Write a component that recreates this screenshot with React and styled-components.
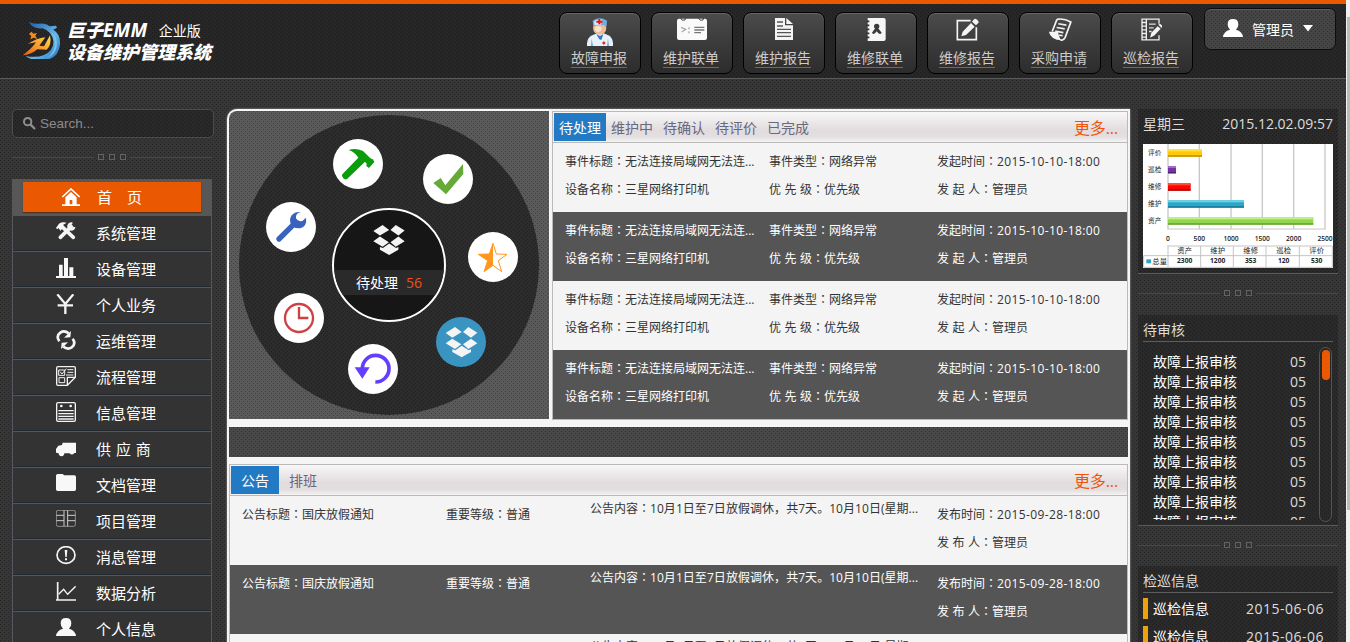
import React from 'react';
import styled, { createGlobalStyle, css } from 'styled-components';

const GlobalStyle = createGlobalStyle`
  * { box-sizing: border-box; }
  html, body { margin: 0; padding: 0; height: 100%; overflow: hidden; }
  body {
    font-family: 'Open Sans', 'Noto Sans CJK SC', sans-serif;
    font-size: 14px;
    color: #fff;
    background: #363636;
  }
  ul { list-style: none; margin: 0; padding: 0; }
  svg { display: block; }
`;

const texture = css`
  background-image:
    conic-gradient(from 0deg at 1px 1px, transparent 270deg, rgba(0, 0, 0, 0.3) 0),
    conic-gradient(from 0deg at 1px 1px, transparent 270deg, rgba(0, 0, 0, 0.3) 0);
  background-size: 4px 4px;
  background-position: 0 0, 2px 2px;
`;

const Window = styled.div`
  display: flex;
  width: 1350px;
  height: 642px;
  overflow: hidden;
`;

const Page = styled.div`
  width: 1346px;
  background-color: #363636;
  ${texture}
`;

const PageScroll = styled.div`
  width: 4px;
  padding: 17px 0 0 1px;
  background: #f0f0f0;
`;

const PageThumb = styled.div`
  height: 493px;
  background: #bcbcbc;
`;

const Header = styled.header`
  display: flex;
  height: 79px;
  border-top: 4px solid #ea5902;
  border-bottom: 1px solid #5a5a5a;
  background-color: #272727;
  ${texture}
`;

const Brand = styled.div`
  display: flex;
  width: 559px;
  padding: 15px 0 0 22px;
`;

const BrandText = styled.div`
  display: flex;
  flex-direction: column;
  margin-left: 7px;
  font-weight: 900;
  font-style: italic;
  font-size: 18px;
  line-height: 22px;
  white-space: nowrap;
`;

const BrandLine = styled.div`
  display: flex;
  align-items: center;
  height: 22px;
`;

const Latin = styled.span`
  font-size: 19px;
  font-weight: 700;
  letter-spacing: 0.3px;
`;

const Edition = styled.span`
  margin: 1px 0 0 11px;
  font-size: 14px;
  font-style: normal;
  font-weight: 400;
`;

const Actions = styled.nav`
  display: flex;
  gap: 10px;
  padding-top: 8px;
`;

const Action = styled.a`
  display: flex;
  flex-direction: column;
  align-items: center;
  width: 82px;
  height: 62px;
  padding: 5px 2px 0 0;
  border: 1px solid #000;
  border-radius: 8px;
  background: linear-gradient(#4b4b4b, #2c2c2c);
  box-shadow: inset 0 1px 0 #666;
  color: #ccc;
`;

const ActionIcon = styled.span`
  display: flex;
  justify-content: center;
  height: 30px;
  margin-right: -1px;
`;

const ActionLabel = styled.span`
  height: 20px;
  border-bottom: 1px solid #6a6a6a;
  line-height: 19px;
`;

const Account = styled.div`
  display: flex;
  align-items: center;
  width: 132px;
  height: 42px;
  margin: 4px 0 0 11px;
  padding: 0 0 2px 18px;
  border: 1px solid #0d0d0d;
  border-radius: 7px;
  background-color: #454545;
  box-shadow: inset 0 1px 0 #5c5c5c;
  ${texture}
`;

const AccountName = styled.span`
  margin: 2px 9px 0 9px;
`;

const Columns = styled.div`
  display: grid;
  grid-template-columns: 202px 903px 200px;
  column-gap: 13px;
  padding: 30px 0 0 12px;
  > :last-child { margin-left: -5px; }
`;

const Column = styled.div`
  width: 200px;
`;

const SearchBox = styled.div`
  display: flex;
  align-items: center;
  width: 202px;
  height: 29px;
  padding-left: 10px;
  border: 1px solid #4c4c4c;
  border-radius: 5px;
  background-color: #292929;
  color: #8c8c8c;
  font: 13.5px 'Liberation Sans', sans-serif;
  ${texture}
  span { margin: -1px 0 0 4px; }
`;

const DividerRow = styled.div`
  display: flex;
  align-items: center;
  gap: 5px;
  height: ${(p) => p.$height}px;
  padding-bottom: ${(p) => p.$height - 38}px;
  &::before, &::after {
    content: '';
    flex: 1;
    height: 1px;
    margin-right: -1px;
    background: #4a4a48;
  }
  &::after { margin: 0 0 0 -1px; }
  i {
    width: 6px;
    height: 6px;
    border: 1px solid #64625e;
  }
`;

const Menu = styled.ul`
  width: 200px;
  border: 1px solid #55585c;
  border-top: 0;
  background: #333;
`;

const HomeItem = styled.li`
  height: 37px;
  margin: 0 -1px;
  padding: 3px 11px 0;
  background: #575757;
`;

const HomeLink = styled.a`
  display: flex;
  align-items: center;
  height: 30px;
  padding: 0 0 2px 39px;
  background: #ea5902;
  box-shadow: 0 1px 1px #54311c;
  font-size: 15px;
  white-space: pre;
  svg { margin: 1px 17px 0 0; }
`;

const MenuItem = styled.li`
  display: flex;
  height: 36px;
  padding: 6px 0 0 43px;
  border-bottom: 1px solid #53565c;
  box-shadow: inset 0 -1px 0 #232933;
  font-size: 15px;
  line-height: 22px;
  span { margin-left: 20px; word-spacing: 1px; }
`;

const Board = styled.main`
  height: 560px;
  padding: 2px;
  border-radius: 10px 0 0 0;
  background: #f5f5f5;
  box-shadow: 0 0 2px #b9b3b3;
`;

const TopRow = styled.div`
  display: flex;
  justify-content: space-between;
  height: 309px;
`;

const Strip = styled.div`
  height: 30px;
  margin: 7px 0;
  background-color: #484848;
  ${texture}
`;

const WheelPane = styled.div`
  width: 320px;
  height: 308px;
  padding: 4px 0 0 10px;
  border-radius: 8px 0 0 0;
  background-color: #5a5a5a;
  ${texture}
`;

const Wheel = styled.div`
  position: relative;
  width: 300px;
  height: 300px;
  border-radius: 50%;
  background-color: #2c2c2c;
  ${texture}
`;

const Node = styled.a`
  position: absolute;
  left: ${(p) => p.$x}px;
  top: ${(p) => p.$y}px;
  width: 50px;
  height: 50px;
  border-radius: 50%;
  background: ${(p) => p.$fill || '#fff'};
`;

const Hub = styled.div`
  position: absolute;
  left: 93px;
  top: 93px;
  display: flex;
  flex-direction: column;
  align-items: center;
  width: 114px;
  height: 114px;
  padding-top: 15px;
  overflow: hidden;
  border: 2px solid #fff;
  border-radius: 50%;
  background-color: #171717;
  ${texture}
`;

const HubLabel = styled.div`
  width: 110px;
  height: 25px;
  margin-top: 15px;
  background: #2a2a2a;
  line-height: 25px;
  text-align: center;
  b { margin-left: 8px; color: #ee4f12; font-weight: 400; }
`;

const Table = styled.section`
  width: ${(p) => p.$width}px;
  border: 1px solid #bababa;
  background: #f4f4f4;
`;

const TabBar = styled.div`
  display: flex;
  height: 31px;
  padding: 1px;
  border-bottom: 1px solid #bababa;
  background: linear-gradient(#f8f7f7, #e2dcde 60%, #e3dedf 82%, #f5f3f3);
`;

const Tab = styled.a`
  height: 28px;
  padding: 0 ${(p) => p.$pad}px;
  background: ${(p) => (p.$active ? '#217ac3' : 'transparent')};
  color: ${(p) => (p.$active ? '#fff' : '#68687e')};
  line-height: 29px;
`;

const More = styled.a`
  margin: 0 8px 0 auto;
  color: #f0540c;
  font-size: 16px;
  letter-spacing: -0.1px;
  line-height: 30px;
`;

const Row = styled.div`
  display: grid;
  grid-template-columns: ${(p) => p.$columns};
  height: 69px;
  padding: 4px 0 0 12px;
  background: ${(p) => (p.$dark ? '#555' : '#f4f4f4')};
  color: ${(p) => (p.$dark ? '#fff' : '#333')};
  font-size: 12px;
  line-height: 28px;
  white-space: nowrap;
  word-spacing: 0.4px;
`;

const Cell = styled.div`
  margin-top: ${(p) => (p.$raised ? '-6px' : 0)};
`;

const FieldLine = styled.div`
  height: 28px;
`;

const Colon = styled.span`
  font-family: 'Noto Sans CJK TC', sans-serif;
`;

const Value = styled.span`
  letter-spacing: ${(p) => p.$track || 0}px;
`;

const Panel = styled.section`
  height: ${(p) => p.$height}px;
  padding: 0 5px;
  border-bottom: 1px solid #5a5a5a;
  background-color: #2a2a2a;
  color: #ddd;
  ${texture}
`;

const Clock = styled.div`
  display: flex;
  justify-content: space-between;
  height: 35px;
  line-height: 30px;
`;

const PanelTitle = styled.h3`
  height: 27px;
  margin: 0;
  border-bottom: 1px solid #5c5c5c;
  font-size: 14px;
  font-weight: 400;
  line-height: 30px;
`;

const ReviewBody = styled.div`
  display: flex;
  justify-content: space-between;
  padding: 5px 0 0 10px;
`;

const ReviewList = styled.ul`
  width: 153px;
  height: 173px;
  padding-top: 5px;
  overflow: hidden;
`;

const ReviewItem = styled.li`
  display: flex;
  justify-content: space-between;
  height: 20px;
  line-height: 20px;
  span:first-child { color: #fff; }
`;

const Track = styled.div`
  width: 13px;
  height: 175px;
  margin-right: 1px;
  padding: 2px 0 0 1.5px;
  border: 1px solid #555;
  border-radius: 7px;
`;

const Thumb = styled.div`
  width: 8px;
  height: 30px;
  border-radius: 4px;
  background: #ea5902;
`;

const PatrolItem = styled.div`
  display: flex;
  justify-content: space-between;
  height: 21px;
  margin: 5px 0 7px;
  padding: 0 9px 0 5px;
  border-left: 5px solid #eda20c;
  line-height: 21px;
  span:first-child { color: #fff; }
`;

const Logo = () => (
  <svg width="38" height="40" viewBox="0 0 114 120">
    <defs>
      <linearGradient id="blue" x1="0" y1="0" x2="1" y2="1">
        <stop offset="0" stopColor="#1755a5" />
        <stop offset="0.6" stopColor="#69b7e8" />
        <stop offset="1" stopColor="#1e6fb9" />
      </linearGradient>
      <linearGradient id="fire" x1="1" y1="0" x2="0" y2="1">
        <stop offset="0" stopColor="#ffe04a" />
        <stop offset="1" stopColor="#ec5a12" />
      </linearGradient>
    </defs>
    <path fill="url(#blue)" d="M20 8Q34 16 50 14Q72 12 82 22L102 20L105 26L94 32Q116 46 114 76Q110 120 64 124Q28 126 10 110Q42 118 66 108Q96 94 94 66Q90 38 62 28Q32 30 20 8Z" />
    <path fill="#77c3ef" d="M84 36Q110 54 104 84Q98 108 74 118Q100 100 98 72Q98 52 84 36Z" />
    <path fill="url(#fire)" d="M2 109Q30 88 42 70L18 74Q44 58 70 55L52 80L66 82L84 49Q90 78 74 92L46 91Q26 108 2 109Z" />
    <path fill="#f58a1c" d="M28 38L35 44L45 42L40 50L46 60L35 56L25 61L28 51L21 45Z" />
  </svg>
);

const actionIcons = {
  doctor: (
    <svg width="26" height="28" viewBox="0 0 78 84">
      <path fill="#e6f1fc" d="M0 84Q-2 60 16 52L30 46H50L64 52Q80 60 78 84Z" />
      <path fill="#6ca8df" d="M14 62L18 84H12ZM63 62L60 84H66Z" />
      <ellipse cx="38" cy="30" rx="20" ry="20" fill="#edbb94" />
      <path fill="#fbe2cc" d="M24 26Q38 20 44 30Q42 44 30 42Q22 38 24 26Z" />
      <path fill="#73aee0" d="M17 8Q38 -6 60 8L59 25Q38 16 19 25Z" />
      <path fill="#d7ebfb" d="M22 9Q34 2 44 4L42 20L22 21Z" />
      <path fill="#e11" d="M34 3h6v5h6v6h-6v5h-6v-5h-6V8h6zM49 70h3v3h3v4h-3v3h-3v-3h-3v-4h3z" />
      <path fill="#2f76c4" d="M28 49L39 54L49 49L43 66L37 64Z" />
    </svg>
  ),
  calendar: (
    <svg width="30" height="22" viewBox="0 0 90 66">
      <rect x="0" y="2" width="90" height="64" rx="6" fill="#fafafa" />
      <path d="M10 0Q14 10 24 6L26 0M64 0Q68 10 78 6L80 0" fill="none" stroke="#444" strokeWidth="3" />
      <path d="M12 28L26 34L14 42M36 28V34M36 40V46" fill="none" stroke="#aaa" strokeWidth="4" />
      <path d="M52 28H82M52 36H82M52 44H72" stroke="#777" strokeWidth="4" />
    </svg>
  ),
  doc: (
    <svg width="18" height="22" viewBox="0 0 54 66">
      <path fill="#f4f4f4" d="M0 0H30V22H54V66H0ZM34 0L54 18H34Z" />
      <path d="M6 12H24M6 24H24M6 34H48M6 44H48M6 55H48" stroke="#555" strokeWidth="4" />
    </svg>
  ),
  contacts: (
    <svg width="20" height="23" viewBox="0 0 58 69">
      <path fill="#f6f6f6" d="M4 0H52Q58 0 58 6V63Q58 69 52 69H4Z" />
      <path d="M0 10H9M0 22H9M0 34H9M0 46H9M0 58H9" stroke="#333" strokeWidth="5" />
      <circle cx="31" cy="25" r="8" fill="#3a3a3a" />
      <path fill="#3a3a3a" d="M27 30H35L46 44Q40 54 31 40Q22 54 17 44Z" />
    </svg>
  ),
  edit: (
    <svg width="23" height="23" viewBox="0 0 69 69">
      <path d="M44 8H4V65H61V28" fill="none" stroke="#f4f4f4" strokeWidth="5" />
      <path fill="#f4f4f4" d="M16 55L20 41L45 15L56 26L30 51ZM48 11L54 4Q58 0 63 5L66 8Q70 12 66 16L60 22Z" />
    </svg>
  ),
  scroll: (
    <svg width="24" height="23" viewBox="0 0 70 68">
      <path d="M26 4Q46 0 67 12L50 58Q46 66 36 66M26 4L12 40" fill="none" stroke="#f4f4f4" strokeWidth="5" />
      <path fill="#f4f4f4" d="M2 41H29Q33 62 40 66Q8 66 2 41Z" />
      <path d="M30 17L54 21M25 28L49 32M21 39L45 43M32 51L43 52" stroke="#eee" strokeWidth="5" />
    </svg>
  ),
  notebook: (
    <svg width="21" height="23" viewBox="0 0 63 68">
      <path d="M54 17V3H3V65H54V51M16 3V65M3 13H16M3 24H16M3 35H16M3 46H16M3 57H16" fill="none" stroke="#eee" strokeWidth="4" />
      <path d="M24 18H44M24 29H38M24 40H32" stroke="#ddd" strokeWidth="4" />
      <path fill="#f4f4f4" d="M27 59L31 44L50 24L59 32L40 52ZM52 20Q57 15 62 21Q66 25 61 29Z" />
    </svg>
  ),
};

const actions = [
  ['doctor', '故障申报'],
  ['calendar', '维护联单'],
  ['doc', '维护报告'],
  ['contacts', '维修联单'],
  ['edit', '维修报告'],
  ['scroll', '采购申请'],
  ['notebook', '巡检报告'],
];

const userShape = (
  <path d="M14 16Q14 0 30 0Q46 0 46 16Q46 27 39 32Q58 37 60 54H0Q2 37 21 32Q14 27 14 16Z" />
);

const MenuIcon = ({ children }) => (
  <svg width="20" height="20" viewBox="0 0 60 60" fill="#f8f8f8">
    {children}
  </svg>
);

const line = { fill: 'none', stroke: '#f4f4f4' };

const menu = [
  ['系统管理', (
    <>
      <path d="M13 46L46 14M18 14L52 46" {...line} strokeWidth="11" strokeLinecap="round" />
      <path d="M0 18L9 5Q19 -2 32 2L21 9L24 15L13 26L8 18L4 22Z" />
      <path d="M49 5A9 9 0 1 0 55 15" {...line} strokeWidth="7" />
    </>
  )],
  ['设备管理', <path d="M0 54H60V60H0ZM9 20H20V56H9ZM24 0H36V56H24ZM40 28H52V56H40Z" />],
  ['个人业务', <path d="M4 1L28 30L52 1M5 34H51M28 30V60" {...line} strokeWidth="7" />],
  ['运维管理', (
    <>
      <path d="M10 34Q-1 18 13 8Q25 0 38 10M50 26Q61 42 47 52Q35 60 22 50" {...line} strokeWidth="8" />
      <path d="M24 23L43 22L45 3ZM36 37L17 38L15 57Z" />
    </>
  )],
  ['流程管理', (
    <>
      <path d="M58 32V6Q58 2 54 2H6Q2 2 2 6V54Q2 58 6 58H34L58 34ZM34 58V34H58" {...line} strokeWidth="4" />
      <path d="M8 12H26V28H8ZM12 17L18 24L31 8M34 11H52M34 19H52M30 27H52M9 35H26V50H9Z" {...line} strokeWidth="3" />
    </>
  )],
  ['信息管理', (
    <>
      <rect x="2" y="2" width="56" height="56" rx="4" {...line} strokeWidth="4" />
      <path d="M7 26H53M7 35H53M7 43H53M7 51H53" {...line} strokeWidth="4" />
      <circle cx="16" cy="12" r="4" /><circle cx="44" cy="12" r="4" />
    </>
  )],
  ['供 应 商', <path d="M20 14H60V45H55A8 8 0 0 1 41 46H25A8 8 0 0 1 8 46L0 44V33L7 23L18 21Z" />],
  ['文档管理', <path d="M0 5Q0 0 5 0H18Q22 0 24 4H55Q60 4 60 9V46Q60 51 55 51H5Q0 51 0 46Z" />],
  ['项目管理', (
    <>
      <rect x="1" y="1" width="57" height="48" rx="5" fill="none" stroke="#bbb" strokeWidth="2" />
      <path d="M24 1V49M35 1V49M1 16H24M1 32H24M35 16H58M35 32H58" fill="none" stroke="#ccc" strokeWidth="3" />
    </>
  )],
  ['消息管理', (
    <>
      <ellipse cx="30" cy="27" rx="27" ry="25" {...line} strokeWidth="5" />
      <path d="M26 12H34L32 33H28ZM27 37H33V43H27Z" />
    </>
  )],
  ['数据分析', (
    <>
      <path d="M5 0V56M0 54H60" {...line} strokeWidth="5" />
      <path d="M8 37L23 22L35 37L59 13" {...line} strokeWidth="4" />
    </>
  )],
  ['个人信息', userShape],
];

const boxPaths = (
  <g fill="#f4f4f4">
    <path d="M0 18L28 0L48 15L20 32ZM52 15L68 0L95 17L76 32ZM0 49L20 35L47 52L28 66ZM52 52L76 35L95 49L68 66ZM48 56L69 70L76 67V75L48 91L20 75V67L29 70Z" />
  </g>
);

const wheelNodes = [
  { x: 94, y: 24, icon: <path fill="#0a9c0a" d="M47 33Q68 25 90 36L109 55L116 60L120 61L124 69L108 87L100 81L101 74L96 68L43 119Q37 124 31 118Q24 112 28 106L76 56Q66 40 47 33Z" /> },
  { x: 184, y: 38.7, icon: <path fill="#65a936" d="M31 87L53 72L67 94L120 30L121 60L69 121Z" /> },
  { x: 229, y: 116.7, icon: (
    <>
      <path fill="#fff" stroke="#ff961f" strokeWidth="3" d="M75 34L85 66L117 67L91 86L101 119L75 100L48 119L59 86L31 67L64 66Z" />
      <path fill="#ff961f" d="M75 34V100L48 120L59 86L31 67L64 66Z" />
    </>
  ) },
  { x: 196.7, y: 202, fill: '#3a94c2', icon: <g transform="translate(29 30)">{boxPaths}</g> },
  { x: 109.2, y: 228.6, icon: (
    <>
      <path fill="none" stroke="#633eff" strokeWidth="11" d="M43 74A40 40 0 1 1 82 114" />
      <path fill="#633eff" d="M20 70H65L43 104Z" />
    </>
  ) },
  { x: 34.6, y: 177.7, icon: (
    <g fill="none" stroke="#cf4145" strokeWidth="7">
      <circle cx="75" cy="75" r="42" /><path d="M75 42V75H103" />
    </g>
  ) },
  { x: 26.6, y: 87, icon: (
    <>
      <path stroke="#3962bd" strokeWidth="16" strokeLinecap="round" d="M39 111L83 67" />
      <path fill="#3962bd" d="M104 30Q88 34 90 49Q97 62 110 56L120 47Q124 72 103 79Q87 80 77 71Q67 55 77 40Q87 28 104 30Z" />
    </>
  ) },
];

const Field = ({ label, track, children }) => (
  <FieldLine>
    {label}
    <Colon>：</Colon>
    <Value $track={track}>{children}</Value>
  </FieldLine>
);

const Divider = ({ height = 41 }) => <DividerRow $height={height}><i /><i /><i /></DividerRow>;

const chartRows = [
  ['评价', 16, 102, '#ffc90a', '#ffe23b', '#b98400'],
  ['巡检', 66, 24, '#7333a4', '#a369cf', '#4d1d77'],
  ['维修', 118, 68, '#fb0505', '#ff4a3a', '#a30000'],
  ['维护', 169, 228, '#2aa6c6', '#67d3ea', '#16718c'],
  ['资产', 220, 436, '#92d550', '#c0f08a', '#5f9c27'],
];

const totals = [['资产', 2300], ['维护', 1200], ['维修', 353], ['巡检', 120], ['评价', 530]];

const Chart = () => (
  <svg width="190" height="124" viewBox="0 0 570 372" fontSize="20" fill="#222" fontFamily="'Open Sans','Noto Sans CJK SC',sans-serif">
    <rect width="570" height="372" fill="#fff" />
    {[75, 169, 264, 358, 452, 546].map((x, i) => (
      <g key={x}>
        <path d={`M${x} 0V255`} stroke="#c8c8c8" strokeWidth="4" />
        <text x={i === 5 ? 546 : x} y="290" textAnchor="middle" fontWeight="600">{i * 500}</text>
      </g>
    ))}
    <path d="M73 255H548" stroke="#c8c8c8" strokeWidth="3" />
    {chartRows.map(([name, y, w, mid, top, bottom]) => (
      <g key={name}>
        <text x="15" y={y + 17}>{name}</text>
        <rect x="75" y={y} width={w} height="22" fill={mid} />
        <rect x="75" y={y} width={w} height="6" fill={top} />
        <rect x="75" y={y + 18} width={w} height="4" fill={bottom} />
      </g>
    ))}
    <path d="M73 306H568M2 335H568M2 370H568M2 335V370M75 306V370M173 306V370M271 306V370M369 306V370M469 306V370M568 306V370" fill="none" stroke="#c4c4c4" strokeWidth="3" />
    {totals.map(([name, value], i) => (
      <g key={name} textAnchor="middle">
        <text x={125 + i * 99} y="328" fontSize="22">{name}</text>
        <text x={125 + i * 99} y="358" fontWeight="700">{value}</text>
      </g>
    ))}
    <rect x="10" y="346" width="14" height="12" fill="#2aa6c6" />
    <text x="28" y="360" fontSize="22">总量</text>
  </svg>
);

export default function App() {
  return (
    <Window>
      <GlobalStyle />
      <Page>
        <Header>
          <Brand>
            <Logo />
            <BrandText>
              <BrandLine>巨子<Latin>EMM</Latin><Edition>企业版</Edition></BrandLine>
              <BrandLine>设备维护管理系统</BrandLine>
            </BrandText>
          </Brand>
          <Actions>
            {actions.map(([icon, label]) => (
              <Action key={label}>
                <ActionIcon>{actionIcons[icon]}</ActionIcon>
                <ActionLabel>{label}</ActionLabel>
              </Action>
            ))}
          </Actions>
          <Account>
            <svg width="20" height="18" viewBox="0 0 60 54" fill="#fff">{userShape}</svg>
            <AccountName>管理员</AccountName>
            <svg width="10" height="7" viewBox="0 0 10 7"><path fill="#fff" d="M0 0H10L5 6.5Z" /></svg>
          </Account>
        </Header>

        <Columns>
          <Column>
            <SearchBox>
              <svg width="13" height="13" viewBox="0 0 39 39" fill="none" stroke="#8f8f8f" strokeWidth="6">
                <circle cx="14" cy="14" r="11" /><path d="M22 22L36 36" strokeWidth="7" />
              </svg>
              <span>Search...</span>
            </SearchBox>
            <Divider />
            <Menu>
              <HomeItem>
                <HomeLink>
                  <svg width="18" height="18" viewBox="0 0 54 54" fill="#fff">
                    <path d="M1 27L27 3L53 27" fill="none" stroke="#fff" strokeWidth="5" />
                    <path d="M10 28L27 12L44 28V49H54V54H0V49H10ZM23 36V49H31V36Z" fillRule="evenodd" />
                  </svg>
                  首　页
                </HomeLink>
              </HomeItem>
              {menu.map(([label, icon]) => (
                <MenuItem key={label}>
                  <MenuIcon>{icon}</MenuIcon>
                  <span>{label}</span>
                </MenuItem>
              ))}
            </Menu>
          </Column>

          <Board>
            <TopRow>
              <WheelPane>
                <Wheel>
                  {wheelNodes.map((n) => (
                    <Node key={`${n.x}-${n.y}`} $x={n.x} $y={n.y} $fill={n.fill}>
                      <svg width="50" height="50" viewBox="0 0 150 150">{n.icon}</svg>
                    </Node>
                  ))}
                  <Hub>
                    <svg width="32" height="30" viewBox="0 0 95 91">{boxPaths}</svg>
                    <HubLabel>待处理<b>56</b></HubLabel>
                  </Hub>
                </Wheel>
              </WheelPane>
              <Table $width={576}>
                <TabBar>
                  {['待处理', '维护中', '待确认', '待评价', '已完成'].map((t, i) => (
                    <Tab key={t} $pad={5} $active={i === 0}>{t}</Tab>
                  ))}
                  <More>更多...</More>
                </TabBar>
                {[0, 1, 2, 3].map((i) => (
                  <Row key={i} $dark={i % 2 === 1} $columns="204px 168px 1fr">
                    <Cell>
                      <Field label="事件标题">无法连接局域网无法连...</Field>
                      <Field label="设备名称">三星网络打印机</Field>
                    </Cell>
                    <Cell>
                      <Field label="事件类型">网络异常</Field>
                      <Field label="优 先 级">优先级</Field>
                    </Cell>
                    <Cell>
                      <Field label="发起时间" track={0.38}>2015-10-10-18:00</Field>
                      <Field label="发 起 人">管理员</Field>
                    </Cell>
                  </Row>
                ))}
              </Table>
            </TopRow>
            <Strip />
            <Table $width={899}>
              <TabBar>
                <Tab $pad={10} $active>公告</Tab>
                <Tab $pad={10}>排班</Tab>
                <More>更多...</More>
              </TabBar>
              {[0, 1, 2].map((i) => (
                <Row key={i} $dark={i % 2 === 1} $columns="204px 144px 347px 1fr">
                  <Cell><Field label="公告标题">国庆放假通知</Field></Cell>
                  <Cell><Field label="重要等级">普通</Field></Cell>
                  <Cell $raised><Field label="公告内容" track={0.05}>10月1日至7日放假调休，共7天。10月10日(星期...</Field></Cell>
                  <Cell>
                    <Field label="发布时间" track={0.38}>2015-09-28-18:00</Field>
                    <Field label="发 布 人">管理员</Field>
                  </Cell>
                </Row>
              ))}
            </Table>
          </Board>

          <Column>
            <Panel $height={165}>
              <Clock><span>星期三</span><span>2015.12.02.09:57</span></Clock>
              <Chart />
            </Panel>
            <Divider />
            <Panel $height={211}>
              <PanelTitle>待审核</PanelTitle>
              <ReviewBody>
                <ReviewList>
                  {Array.from({ length: 9 }, (_, i) => (
                    <ReviewItem key={i}><span>故障上报审核</span><span>05</span></ReviewItem>
                  ))}
                </ReviewList>
                <Track><Thumb /></Track>
              </ReviewBody>
            </Panel>
            <Divider height={40} />
            <Panel $height={140}>
              <PanelTitle>检巡信息</PanelTitle>
              {[0, 1, 2].map((i) => (
                <PatrolItem key={i}><span>巡检信息</span><Value $track={0.5}>2015-06-06</Value></PatrolItem>
              ))}
            </Panel>
          </Column>
        </Columns>
      </Page>
      <PageScroll><PageThumb /></PageScroll>
    </Window>
  );
}
